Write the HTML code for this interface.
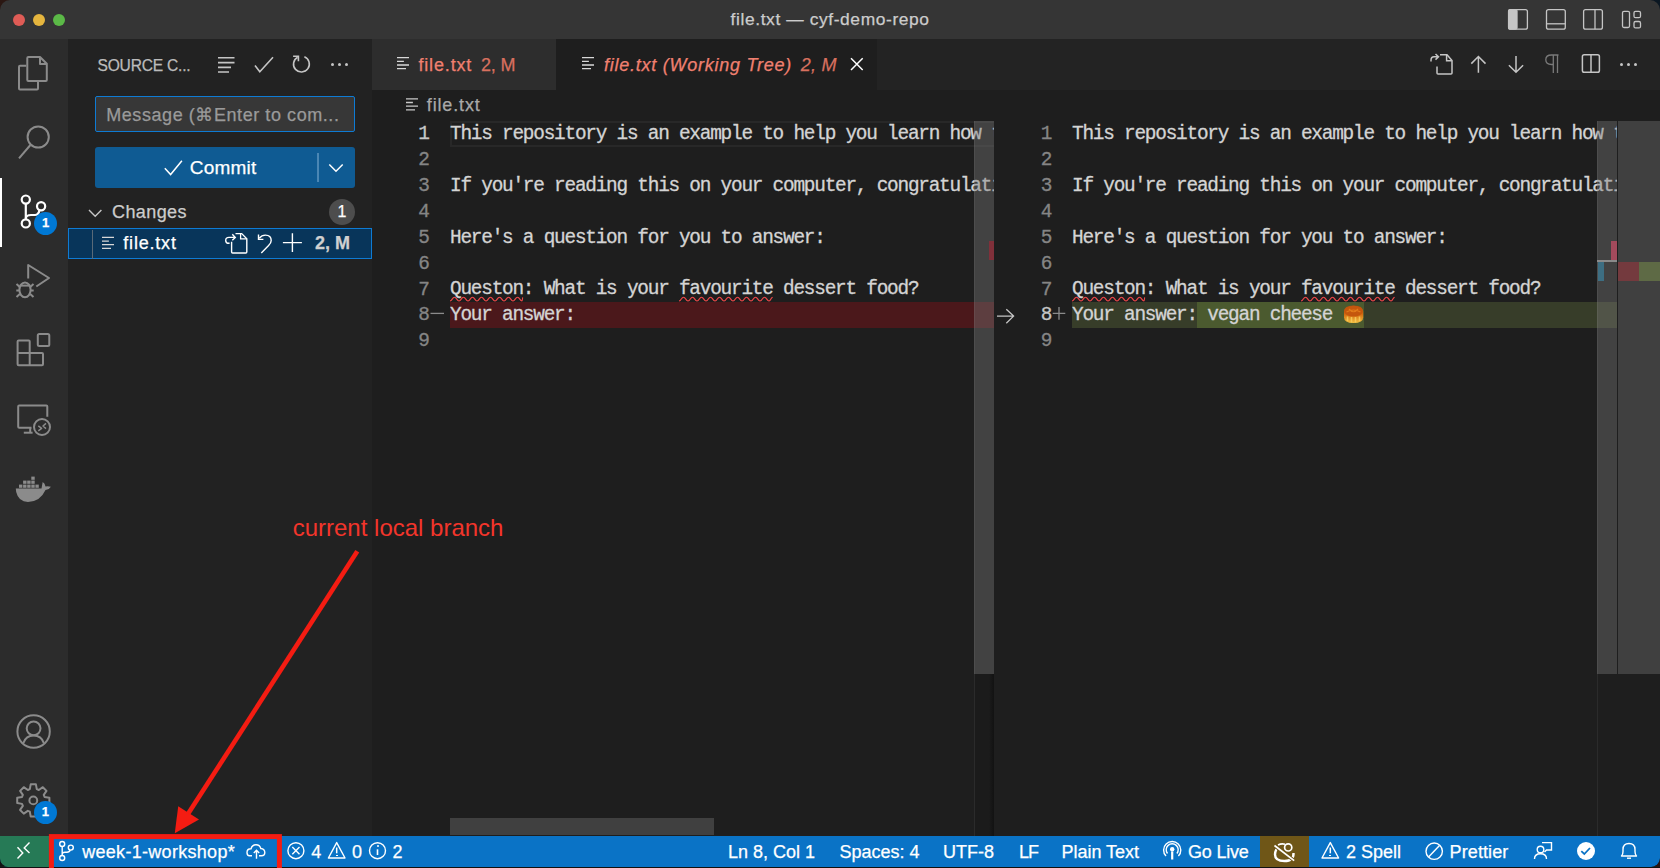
<!DOCTYPE html>
<html><head><meta charset="utf-8">
<style>
*{box-sizing:border-box;margin:0;padding:0}
html,body{width:1660px;height:868px;overflow:hidden;background:#1e1e1e}
body{position:relative;font-family:"Liberation Sans",sans-serif;color:#ccc;-webkit-text-stroke-width:0.25px}
.a{position:absolute;white-space:nowrap}
svg{position:absolute;overflow:visible}
.mono{font-family:"Liberation Mono",monospace}
#title{left:0;top:0;width:1660px;height:39px;background:#353535}
#act{left:0;top:39px;width:68px;height:797px;background:#2c2c2c}
#side{left:68px;top:39px;width:304px;height:797px;background:#222222}
#tabs{left:372px;top:39px;width:1288px;height:50.6px;background:#232323}
#status{left:0;top:836px;width:1660px;height:32px;background:#007acc}
.code{font-family:"Liberation Mono",monospace;font-size:19.40px;letter-spacing:-1.230px;line-height:25.9px;height:25.9px;color:#d4d4d4;-webkit-text-stroke-width:0.3px}
.ln{width:40px;text-align:right;color:#858585;letter-spacing:0}
.sb{top:842.3px;font-size:18px;color:#fff;line-height:20px}
</style></head><body>
<!-- title bar -->
<div id="title" class="a">
  <div class="a" style="left:12.9px;top:13.8px;width:12.4px;height:12.4px;border-radius:50%;background:#df5c56"></div>
  <div class="a" style="left:32.9px;top:13.8px;width:12.4px;height:12.4px;border-radius:50%;background:#e5b53e"></div>
  <div class="a" style="left:52.9px;top:13.8px;width:12.4px;height:12.4px;border-radius:50%;background:#5bb947"></div>
  <div class="a" style="left:730.6px;top:9px;font-size:17.4px;letter-spacing:0.6px;color:#cccccc;white-space:nowrap">file.txt — cyf-demo-repo</div>
  <svg style="left:0;top:0" width="1660" height="38" fill="none" stroke="#c5c5c5" stroke-width="1.3">
    <rect x="1508.6" y="9.6" width="18.8" height="19.6" rx="2"/>
    <rect x="1508.6" y="9.6" width="8.4" height="19.6" rx="1.5" fill="#c5c5c5"/>
    <rect x="1546.5" y="9.6" width="18.8" height="19.6" rx="2"/>
    <line x1="1546.5" y1="23.8" x2="1565.3" y2="23.8"/>
    <rect x="1583.6" y="9.6" width="18.8" height="19.6" rx="2"/>
    <line x1="1595" y1="9.6" x2="1595" y2="29.2"/>
    <rect x="1622.5" y="11.3" width="7" height="16.2" rx="1.5"/>
    <rect x="1634" y="11.3" width="6.5" height="6.4" rx="1.5"/>
    <rect x="1634" y="21.5" width="6.5" height="6.4" rx="1.5"/>
  </svg>
</div>
<!-- activity bar -->
<div id="act" class="a"></div>
<div class="a" style="left:0;top:178px;width:1.6px;height:69px;background:#ffffff"></div>
<svg style="left:0;top:0" width="68" height="836" fill="none" stroke="#8b8b8b" stroke-width="2" stroke-linejoin="round">
  <!-- files -->
  <path d="M26.2,65.8 H20 Q19,65.8 19,66.8 V88.6 Q19,89.6 20,89.6 H37 Q38,89.6 38,88.6 V82"/>
  <path d="M28.3,57 H40 L46.8,63.8 V79.9 Q46.8,81 45.8,81 H28.3 Q27.3,81 27.3,80 V58 Q27.3,57 28.3,57Z"/>
  <path d="M40,57.3 V64 H46.5"/>
  <!-- search -->
  <circle cx="38.2" cy="137" r="10.6"/>
  <line x1="30.4" y1="145" x2="19" y2="158.3"/>
  <!-- debug -->
  <path d="M28.2,278.6 V265 L49,278 L36.3,286.5"/>
  <ellipse cx="25" cy="289.8" rx="5.6" ry="7.4"/>
  <line x1="19.6" y1="285.6" x2="30.4" y2="285.6"/>
  <path d="M16.5,284 L19.8,287 M33.5,284 L30.2,287 M16.3,290.5 H19.5 M30.5,290.5 H33.7 M16.5,297 L19.8,294 M33.5,297 L30.2,294" />
  <!-- extensions -->
  <rect x="37.8" y="334" width="11.5" height="11.9" rx="1.5"/>
  <path d="M18.6,340.4 H28.7 Q29.7,340.4 29.7,341.4 V353 H42 Q43,353 43,354 V364.2 Q43,365.2 42,365.2 H18.6 Q17.6,365.2 17.6,364.2 V341.4 Q17.6,340.4 18.6,340.4Z"/>
  <path d="M17.6,353 H29.7 V365.2"/>
  <!-- remote explorer -->
  <path d="M31.5,427.7 H19.2 Q18.2,427.7 18.2,426.7 V406.5 Q18.2,405.5 19.2,405.5 H46.3 Q47.3,405.5 47.3,406.5 V416.8"/>
  <line x1="23.8" y1="432.7" x2="32.6" y2="432.7"/>
  <line x1="30.2" y1="428" x2="30.2" y2="432.7"/>
  <circle cx="42" cy="427" r="8"/>
  <path d="M38.3,425.9 L41.6,428.4 L38.3,430.9 M46,423.4 L43,426 L46,428.6" stroke-width="1.5"/>
  <!-- account -->
  <circle cx="33.6" cy="731.5" r="16.2"/>
  <circle cx="33.6" cy="728.3" r="6.9"/>
  <path d="M23.4,743 Q26,735.6 33.6,735.6 Q41.2,735.6 43.8,743"/>
  <!-- gear -->
  <path d="M29.81,789.13 L30.70,784.31 L35.90,784.31 L36.79,789.13 L38.81,789.96 L42.84,787.19 L46.51,790.86 L43.74,794.89 L44.57,796.91 L49.39,797.80 L49.39,803.00 L44.57,803.89 L43.74,805.91 L46.51,809.94 L42.84,813.61 L38.81,810.84 L36.79,811.67 L35.90,816.49 L30.70,816.49 L29.81,811.67 L27.79,810.84 L23.76,813.61 L20.09,809.94 L22.86,805.91 L22.03,803.89 L17.21,803.00 L17.21,797.80 L22.03,796.91 L22.86,794.89 L20.09,790.86 L23.76,787.19 L27.79,789.96Z"/>
  <circle cx="33.3" cy="800.4" r="3.9"/>
</svg>
<!-- docker -->
<svg style="left:0;top:0" width="68" height="836" fill="#8b8b8b">
  <path d="M15.8,488.4 H41.5 Q42.5,483 42.7,482 Q45,483.2 45.5,486.5 Q48,486 50.9,486.7 Q49.5,489.5 45.5,490 Q40,501.9 28,501.9 Q18.5,501.9 16.2,492 Z"/>
  <g>
    <rect x="19" y="484.6" width="3.4" height="3.2"/>
    <rect x="23.1" y="484.6" width="3.4" height="3.2"/>
    <rect x="27.2" y="484.6" width="3.4" height="3.2"/>
    <rect x="31.3" y="484.6" width="3.4" height="3.2"/>
    <rect x="35.4" y="484.6" width="3.4" height="3.2"/>
    <rect x="23.1" y="480.6" width="3.4" height="3.2"/>
    <rect x="27.2" y="480.6" width="3.4" height="3.2"/>
    <rect x="31.3" y="480.6" width="3.4" height="3.2"/>
    <rect x="31.3" y="476.6" width="3.4" height="3.2"/>
  </g>
</svg>
<!-- SCM active -->
<svg style="left:0;top:0" width="68" height="836" fill="none" stroke="#ffffff" stroke-width="2.2">
  <circle cx="25.8" cy="199.6" r="4.1"/>
  <circle cx="41.1" cy="206.2" r="4.1"/>
  <circle cx="25.8" cy="223.4" r="4.1"/>
  <path d="M25.8,203.7 V219.3"/>
  <path d="M25.8,218 Q26.5,215 31,215 H35 Q38.5,215 39.6,210"/>
</svg>
<div class="a" style="left:33.9px;top:211.7px;width:23.4px;height:23.4px;border-radius:50%;background:#0078d4"></div>
<div class="a" style="left:33.9px;top:214.7px;width:23.4px;text-align:center;font-size:13px;font-weight:bold;color:#fff">1</div>
<div class="a" style="left:34px;top:801.1px;width:22.8px;height:22.8px;border-radius:50%;background:#0078d4"></div>
<div class="a" style="left:34px;top:803.8px;width:22.8px;text-align:center;font-size:13px;font-weight:bold;color:#fff">1</div>
<!-- sidebar -->
<div id="side" class="a"></div>
<div class="a" style="left:97.5px;top:56.8px;font-size:15.6px;letter-spacing:-0.22px;color:#bbbbbb">SOURCE C...</div>

<!-- commit input -->
<div class="a" style="left:95.4px;top:95.6px;width:259.6px;height:36.7px;background:#373737;border:1.3px solid #0e7bd4;border-radius:2px"></div>
<div class="a" style="left:106.2px;top:104.3px;font-size:18px;letter-spacing:0.57px;color:#9a9a9a">Message (⌘Enter to com...</div>
<!-- commit button -->
<div class="a" style="left:95.2px;top:147.3px;width:259.6px;height:40.5px;background:#0f5b93;border-radius:3px"></div>
<div class="a" style="left:189.8px;top:156.5px;font-size:19px;letter-spacing:0.2px;color:#ffffff">Commit</div>
<!-- changes -->
<div class="a" style="left:112px;top:202px;font-size:18px;letter-spacing:0.4px;color:#cccccc">Changes</div>
<div class="a" style="left:329px;top:199px;width:26px;height:26px;border-radius:50%;background:#4d4d4d"></div>
<div class="a" style="left:329px;top:203.2px;width:26px;text-align:center;font-size:16px;color:#fff">1</div>
<!-- file row -->
<div class="a" style="left:68px;top:228.2px;width:304px;height:31.2px;background:#08355a;border:1.2px solid #0e7bd4"></div>
<div class="a" style="left:91.5px;top:229.5px;width:1px;height:29px;background:#5a6a78"></div>
<div class="a" style="left:123.3px;top:233.3px;font-size:18px;letter-spacing:0.8px;color:#ffffff">file.txt</div>
<div class="a" style="left:315px;top:233.3px;font-size:18px;font-weight:bold;letter-spacing:0px;color:#d0d0d0">2, M</div>
<svg style="left:0;top:0" width="372" height="836" fill="none" stroke="#c5c5c5" stroke-width="1.6">
  <!-- list (tree) icon -->
  <path d="M218,57.8 H234.5 M218,62.6 H234.5 M218,67.4 H231 M218,72 H229" />
  <!-- check -->
  <path d="M255,65.5 L259.8,71.8 L273,57.3" />
  <!-- refresh -->
  <path d="M304.4,56.8 A7.9,7.9 0 1 1 297.6,57.2" />
  <path d="M293.1,56.3 H298.4 V61.3" />
  <!-- commit check -->
  <path d="M164.8,168.3 L170.6,174.6 L181.9,160.8" stroke="#fff" stroke-width="1.5"/>
  <line x1="318" y1="153" x2="318" y2="182" stroke="#6b9fc6" stroke-width="1.3"/>
  <path d="M329.3,164.5 L336,171.2 L342.7,164.5" stroke="#fff" stroke-width="1.5"/>
  <!-- changes chevron -->
  <path d="M89,210 L95.2,216.3 L101.4,210" stroke-width="1.4"/>
  <!-- file row icons -->
  <path d="M102,237.4 H114 M102,241.1 H108.9 M102,244.7 H114 M102,248.4 H111" stroke="#d8d8d8" stroke-width="1.3"/>
  <!-- open file -->
  <path d="M231.6,241.8 V252 Q231.6,253 232.6,253 H245.8 Q246.8,253 246.8,252 V238.8 L241.7,233.6 H235.5" stroke="#fff" stroke-width="1.4"/>
  <path d="M240.6,233.8 V238.8 H246.6" stroke="#fff" stroke-width="1.3"/>
  <path d="M232.3,234.2 L235.3,237.4 L232.3,240.2 M234.8,237.4 H229 Q225.7,237.4 225.7,240.4 Q225.7,243.3 229,243.3 H229.6" stroke="#fff" stroke-width="1.4"/>
  <!-- revert -->
  <path d="M261.3,252.9 L268.6,245.6 Q271.2,243 271.2,240.6 Q271.2,235.1 265.4,235.1 Q261.7,235.1 259.2,238.2" stroke="#fff" stroke-width="1.4"/>
  <path d="M258.5,234.6 V239.4 H263.4" stroke="#fff" stroke-width="1.4"/>
  <!-- plus -->
  <path d="M292.4,233.2 V251.9 M282.9,242.6 H301.9" stroke="#fff" stroke-width="1.4"/>
</svg>
<div class="a" style="left:330.5px;top:62.5px;width:3.2px;height:3.2px;border-radius:50%;background:#c5c5c5"></div>
<div class="a" style="left:337.5px;top:62.5px;width:3.2px;height:3.2px;border-radius:50%;background:#c5c5c5"></div>
<div class="a" style="left:344.5px;top:62.5px;width:3.2px;height:3.2px;border-radius:50%;background:#c5c5c5"></div>
<!-- tabs -->
<div id="tabs" class="a"></div>
<div class="a" style="left:372px;top:39px;width:184.3px;height:50.6px;background:#2d2d2d"></div>
<div class="a" style="left:556.3px;top:39px;width:320.3px;height:50.6px;background:#1e1e1e"></div>
<div class="a" style="left:418.4px;top:54.7px;font-size:18px;letter-spacing:0.85px;color:#f08070">file.txt</div>
<div class="a" style="left:481px;top:54.7px;font-size:18px;letter-spacing:-0.2px;color:#d8705f">2, M</div>
<div class="a" style="left:604px;top:54.7px;font-size:18px;font-style:italic;letter-spacing:0.75px;color:#f08070">file.txt (Working Tree)</div>
<div class="a" style="left:800.8px;top:54.7px;font-size:18px;font-style:italic;letter-spacing:0.2px;color:#d8705f">2, M</div>
<svg style="left:0;top:0" width="1660" height="130" fill="none" stroke="#c5c5c5" stroke-width="1.5">
  <!-- tab icons -->
  <path d="M397,57.7 H409 M397,61.4 H403.9 M397,65 H409 M397,68.7 H406" stroke="#d8d8d8" stroke-width="1.3"/>
  <path d="M582,57.7 H594 M582,61.4 H588.9 M582,65 H594 M582,68.7 H591" stroke="#d8d8d8" stroke-width="1.3"/>
  <path d="M406,98.8 H418 M406,102.5 H412.9 M406,106.1 H418 M406,109.8 H415" stroke="#c8c8c8" stroke-width="1.3"/>
  <!-- close -->
  <path d="M851,58.3 L862.7,70 M862.7,58.3 L851,70" stroke="#ffffff" stroke-width="1.5"/>
  <!-- editor actions -->
  <path d="M1437,66.5 V73 Q1437,74 1438,74 H1451 Q1452,74 1452,73 V60.5 L1447,54.7 H1440" />
  <path d="M1446.6,55 V60.8 H1451.8" />
  <path d="M1435.5,54 L1438.5,56.8 L1435.5,59.6 M1438.2,56.8 H1434 Q1431,56.8 1431,60.2 V61.5" />
  <path d="M1478.4,56.5 V72.8 M1471.3,63.6 L1478.4,56.5 L1485.5,63.6" />
  <path d="M1516,56 V72.3 M1508.9,65.2 L1516,72.3 L1523.1,65.2" />
  <path d="M1553.3,55 V73 M1557.5,55 V73 M1558.5,55 H1551.5 Q1545.8,55 1545.8,59.8 Q1545.8,64.5 1551.5,64.5 H1553.3" stroke="#7a7a7a" stroke-width="1.3"/>
  <rect x="1582.4" y="54.7" width="17" height="17.5" rx="1.8"/>
  <line x1="1591" y1="54.7" x2="1591" y2="72.2"/>
</svg>
<div class="a" style="left:1619.5px;top:62.6px;width:3.2px;height:3.2px;border-radius:50%;background:#c5c5c5"></div>
<div class="a" style="left:1626.5px;top:62.6px;width:3.2px;height:3.2px;border-radius:50%;background:#c5c5c5"></div>
<div class="a" style="left:1633.5px;top:62.6px;width:3.2px;height:3.2px;border-radius:50%;background:#c5c5c5"></div>
<div class="a" style="left:426.8px;top:95.2px;font-size:18px;letter-spacing:0.85px;color:#a9a9a9">file.txt</div>
<!-- editor code -->
<div class="a" style="left:449.9px;top:121.1px;width:544.3px;height:25.90px;border:2.2px solid #282828;border-right:none"></div>
<div class="a" style="left:449.9px;top:302.40px;width:544.3px;height:25.90px;background:#4b181b"></div>
<div class="a" style="left:1072px;top:302.40px;width:588px;height:25.90px;background:#373d29"></div>
<div class="a" style="left:1196.9px;top:302.40px;width:167.1px;height:25.90px;background:#4b5a2f"></div>
<div class="a" style="left:450px;top:121.1px;width:544px;height:240px;overflow:hidden">
<div class="a code" style="left:0;top:1.00px">This repository is an example to help you learn how to use Git and GitHub.</div>
<div class="a code" style="left:0;top:52.80px">If you're reading this on your computer, congratulations! You've cloned it.</div>
<div class="a code" style="left:0;top:104.60px">Here's a question for you to answer:</div>
<div class="a code" style="left:0;top:156.40px">Queston: What is your favourite dessert food?</div>
<div class="a code" style="left:0;top:182.30px">Your answer:</div>
</div>
<div class="a code ln" style="left:389.8px;top:122.10px;color:#c6c6c6">1</div>
<div class="a code ln" style="left:389.8px;top:148.00px">2</div>
<div class="a code ln" style="left:389.8px;top:173.90px">3</div>
<div class="a code ln" style="left:389.8px;top:199.80px">4</div>
<div class="a code ln" style="left:389.8px;top:225.70px">5</div>
<div class="a code ln" style="left:389.8px;top:251.60px">6</div>
<div class="a code ln" style="left:389.8px;top:277.50px">7</div>
<div class="a code ln" style="left:389.8px;top:303.40px">8</div>
<div class="a code ln" style="left:389.8px;top:329.30px">9</div>
<div class="a" style="left:1072px;top:121.1px;width:545px;height:240px;overflow:hidden">
<div class="a code" style="left:0;top:1.00px">This repository is an example to help you learn how to use Git and GitHub.</div>
<div class="a code" style="left:0;top:52.80px">If you're reading this on your computer, congratulations! You've cloned it.</div>
<div class="a code" style="left:0;top:104.60px">Here's a question for you to answer:</div>
<div class="a code" style="left:0;top:156.40px">Queston: What is your favourite dessert food?</div>
<div class="a code" style="left:0;top:182.30px">Your answer: vegan cheese </div>
</div>
<div class="a code ln" style="left:1012.3px;top:122.10px">1</div>
<div class="a code ln" style="left:1012.3px;top:148.00px">2</div>
<div class="a code ln" style="left:1012.3px;top:173.90px">3</div>
<div class="a code ln" style="left:1012.3px;top:199.80px">4</div>
<div class="a code ln" style="left:1012.3px;top:225.70px">5</div>
<div class="a code ln" style="left:1012.3px;top:251.60px">6</div>
<div class="a code ln" style="left:1012.3px;top:277.50px">7</div>
<div class="a code ln" style="left:1012.3px;top:303.40px;color:#c6c6c6">8</div>
<div class="a code ln" style="left:1012.3px;top:329.30px">9</div>
<!-- decorations -->
<svg style="left:0;top:0" width="1660" height="868" fill="none" stroke="#f0484a" stroke-width="1.15"><path d="M450.0,301.0 C452.2,301.0 452.2,297.2 454.5,297.2 C456.8,297.2 456.8,301.0 459.0,301.0 C461.2,301.0 461.2,297.2 463.5,297.2 C465.8,297.2 465.8,301.0 468.0,301.0 C470.2,301.0 470.2,297.2 472.5,297.2 C474.8,297.2 474.8,301.0 477.0,301.0 C479.2,301.0 479.2,297.2 481.5,297.2 C483.8,297.2 483.8,301.0 486.0,301.0 C488.2,301.0 488.2,297.2 490.5,297.2 C492.8,297.2 492.8,301.0 495.0,301.0 C497.2,301.0 497.2,297.2 499.5,297.2 C501.8,297.2 501.8,301.0 504.0,301.0 C506.2,301.0 506.2,297.2 508.5,297.2 C510.8,297.2 510.8,301.0 513.0,301.0 C515.2,301.0 515.2,297.2 517.5,297.2 C519.8,297.2 519.8,301.0 522.0,301.0 C522.4,301.0 522.4,297.2 522.9,297.2"/>
<path d="M679.0,301.0 C681.3,301.0 681.3,297.2 683.5,297.2 C685.8,297.2 685.8,301.0 688.0,301.0 C690.3,301.0 690.3,297.2 692.5,297.2 C694.8,297.2 694.8,301.0 697.0,301.0 C699.3,301.0 699.3,297.2 701.5,297.2 C703.8,297.2 703.8,301.0 706.0,301.0 C708.3,301.0 708.3,297.2 710.5,297.2 C712.8,297.2 712.8,301.0 715.0,301.0 C717.3,301.0 717.3,297.2 719.5,297.2 C721.8,297.2 721.8,301.0 724.0,301.0 C726.3,301.0 726.3,297.2 728.5,297.2 C730.8,297.2 730.8,301.0 733.0,301.0 C735.3,301.0 735.3,297.2 737.5,297.2 C739.8,297.2 739.8,301.0 742.0,301.0 C744.3,301.0 744.3,297.2 746.5,297.2 C748.8,297.2 748.8,301.0 751.0,301.0 C753.3,301.0 753.3,297.2 755.5,297.2 C757.8,297.2 757.8,301.0 760.0,301.0 C762.3,301.0 762.3,297.2 764.5,297.2 C766.8,297.2 766.8,301.0 769.0,301.0 C770.9,301.0 770.9,297.2 772.7,297.2"/>
<path d="M1072.0,301.0 C1074.2,301.0 1074.2,297.2 1076.5,297.2 C1078.8,297.2 1078.8,301.0 1081.0,301.0 C1083.2,301.0 1083.2,297.2 1085.5,297.2 C1087.8,297.2 1087.8,301.0 1090.0,301.0 C1092.2,301.0 1092.2,297.2 1094.5,297.2 C1096.8,297.2 1096.8,301.0 1099.0,301.0 C1101.2,301.0 1101.2,297.2 1103.5,297.2 C1105.8,297.2 1105.8,301.0 1108.0,301.0 C1110.2,301.0 1110.2,297.2 1112.5,297.2 C1114.8,297.2 1114.8,301.0 1117.0,301.0 C1119.2,301.0 1119.2,297.2 1121.5,297.2 C1123.8,297.2 1123.8,301.0 1126.0,301.0 C1128.2,301.0 1128.2,297.2 1130.5,297.2 C1132.8,297.2 1132.8,301.0 1135.0,301.0 C1137.2,301.0 1137.2,297.2 1139.5,297.2 C1141.8,297.2 1141.8,301.0 1144.0,301.0 C1144.4,301.0 1144.4,297.2 1144.9,297.2"/>
<path d="M1301.0,301.0 C1303.3,301.0 1303.3,297.2 1305.5,297.2 C1307.8,297.2 1307.8,301.0 1310.0,301.0 C1312.3,301.0 1312.3,297.2 1314.5,297.2 C1316.8,297.2 1316.8,301.0 1319.0,301.0 C1321.3,301.0 1321.3,297.2 1323.5,297.2 C1325.8,297.2 1325.8,301.0 1328.0,301.0 C1330.3,301.0 1330.3,297.2 1332.5,297.2 C1334.8,297.2 1334.8,301.0 1337.0,301.0 C1339.3,301.0 1339.3,297.2 1341.5,297.2 C1343.8,297.2 1343.8,301.0 1346.0,301.0 C1348.3,301.0 1348.3,297.2 1350.5,297.2 C1352.8,297.2 1352.8,301.0 1355.0,301.0 C1357.3,301.0 1357.3,297.2 1359.5,297.2 C1361.8,297.2 1361.8,301.0 1364.0,301.0 C1366.3,301.0 1366.3,297.2 1368.5,297.2 C1370.8,297.2 1370.8,301.0 1373.0,301.0 C1375.3,301.0 1375.3,297.2 1377.5,297.2 C1379.8,297.2 1379.8,301.0 1382.0,301.0 C1384.3,301.0 1384.3,297.2 1386.5,297.2 C1388.8,297.2 1388.8,301.0 1391.0,301.0 C1392.9,301.0 1392.9,297.2 1394.7,297.2"/></svg>
<div class="a" style="left:973.8px;top:121px;width:20.5px;height:553px;background:rgba(121,121,121,0.4);border-left:1px solid rgba(255,255,255,0.06)"></div>
<div class="a" style="left:973.8px;top:674px;width:20.5px;height:162px;background:#1b1b1b;border-left:1px solid #2b2b2b"></div>
<div class="a" style="left:989px;top:674px;width:5.3px;height:162px;background:linear-gradient(to right,rgba(0,0,0,0),rgba(0,0,0,0.35))"></div>
<div class="a" style="left:989px;top:241px;width:5.2px;height:19.3px;background:#80303a"></div>
<div class="a" style="left:1596.9px;top:121px;width:20.2px;height:553px;background:rgba(121,121,121,0.4);border-left:1px solid rgba(255,255,255,0.06)"></div>
<div class="a" style="left:1596.9px;top:674px;width:20.2px;height:162px;background:#1e1e1e;border-left:1px solid #2b2b2b"></div>
<div class="a" style="left:1617px;top:121px;width:1.1px;height:553px;background:#1e1e1e"></div>
<div class="a" style="left:1618.1px;top:121px;width:41.9px;height:553px;background:#404040"></div>
<div class="a" style="left:1611px;top:241px;width:6px;height:19.3px;background:#a34a5c"></div>
<div class="a" style="left:1597px;top:260px;width:20px;height:1.8px;background:#8a8a8a"></div>
<div class="a" style="left:1598px;top:261.7px;width:5.7px;height:19.2px;background:#3d6e82"></div>
<div class="a" style="left:1618.1px;top:261.7px;width:21.1px;height:19.2px;background:#743a3e"></div>
<div class="a" style="left:1639.2px;top:261.7px;width:20.8px;height:19.2px;background:#5e6a45"></div>
<div class="a" style="left:449.9px;top:817.9px;width:263.9px;height:17.4px;background:#404040"></div>
<svg style="left:0;top:0" width="1660" height="868" fill="none" stroke="#c5c5c5" stroke-width="1.3"><path d="M997,316.1 H1014 M1006.3,309.2 L1013.6,316.1 L1006.3,323.2"/><path d="M430.5,313.4 H444" stroke="#8b8b8b"/><path d="M1052.7,313.4 H1065.3 M1059,307 V319.7" stroke="#8b8b8b"/></svg>
<svg style="left:0;top:0" width="1660" height="868">
<defs><linearGradient id="eg" x1="0" y1="0" x2="0" y2="1"><stop offset="0" stop-color="#b84a0c"/><stop offset="0.5" stop-color="#d46a10"/><stop offset="1" stop-color="#f4c040"/></linearGradient></defs>
<path d="M1344,311.5 Q1344,305.5 1353.5,305.5 Q1363.2,305.5 1363.2,311.5 V317.2 Q1363.2,323 1353.5,323 Q1344,323 1344,317.2 Z" fill="url(#eg)"/>
<ellipse cx="1353.5" cy="311.2" rx="9.4" ry="5.4" fill="#c4560d"/>
<path d="M1346.5,312 Q1353.5,308 1360.5,312 M1349,309 Q1353.5,314.5 1358,309" stroke="#e07a1a" stroke-width="1.2" fill="none"/>
<path d="M1347.5,316.5 V321 M1351.5,317 V322.5 M1355.5,317 V322.5 M1359.5,316.5 V321" stroke="#f8d060" stroke-width="1.6" opacity="0.8"/>
</svg>
<!-- status bar -->
<div class="a" style="left:0;top:866.6px;width:1660px;height:1.4px;background:#111"></div>
<div class="a" style="left:0;top:835.8px;width:1660px;height:30.8px;background:#0a73c6;border-radius:0 0 9px 8px"></div>
<div class="a" style="left:0;top:835.8px;width:49px;height:30.8px;background:#267a56;border-radius:0 0 0 8px"></div>
<div class="a" style="left:1259.9px;top:835.8px;width:48.8px;height:30.8px;background:#6f5617"></div>
<svg style="left:0;top:0" width="1660" height="868" fill="none" stroke="#ffffff" stroke-width="1.4">
  <path d="M17.5,847.2 L22.8,853 L17.5,858.6 M29.5,842.6 L24.2,848 L29.5,853"/>
  <circle cx="62.2" cy="844" r="2.5"/>
  <circle cx="70.8" cy="847.6" r="2.5"/>
  <circle cx="62.2" cy="858" r="2.5"/>
  <path d="M62.2,846.5 V855.5 M62.2,854 Q62.5,852.2 65,852.2 H67 Q69.5,852.2 70.2,850"/>
  <!-- cloud -->
  <path d="M252,855.8 H249.5 Q247,855.8 247,852.5 Q247,848.8 251,848.8 Q252,844.7 256,844.7 Q259.8,844.7 260.8,848.5 Q264.8,849 264.8,852.6 Q264.8,855.8 261.5,855.8 H259"/>
  <path d="M256.5,858.7 V850.3 M253.8,853 L256.5,850.3 L259.2,853"/>
  <!-- error -->
  <circle cx="295.9" cy="850.7" r="8"/>
  <path d="M292.3,847.1 L299.5,854.3 M299.5,847.1 L292.3,854.3"/>
  <!-- warning -->
  <path d="M336.7,842.6 L345,858 H328.4 Z" stroke-linejoin="round"/>
  <path d="M336.7,847.5 V853.3" stroke-width="1.5"/>
  <!-- info -->
  <circle cx="377.5" cy="850.7" r="8"/>
  <path d="M377.5,849.3 V855" stroke-width="1.6"/>
  <!-- go live -->
  <circle cx="1172.2" cy="849.2" r="2.2" fill="#fff" stroke="none"/>
  <path d="M1172.2,851.4 V859.5" stroke-width="2.2"/>
  <path d="M1167.5,853.5 A6,6 0 1 1 1176.9,853.5"/>
  <path d="M1166,856 A8.6,8.6 0 1 1 1178.4,856"/>
  <!-- copilot-ish crossed -->
  <circle cx="1288.2" cy="847.4" r="3.6" stroke-width="1.7"/>
  <path d="M1278,845 Q1281.5,843.2 1285,844.2" stroke-width="1.7"/>
  <path d="M1276.5,849 Q1275,852 1275,854.5 Q1275,861 1284.5,861 Q1294,861 1293.5,853" stroke-width="2.4"/>
    <path d="M1274.5,845.5 L1294.2,860.6" stroke="#6f5617" stroke-width="3.6"/>
  <path d="M1274.5,845.5 L1294.2,860.6" stroke-width="1.7"/>
  <!-- 2 spell warning -->
  <path d="M1330.3,842.6 L1338.6,858 H1322 Z" stroke-linejoin="round"/>
  <path d="M1330.3,847.5 V853.3" stroke-width="1.5"/>
  <!-- prettier -->
  <circle cx="1434.2" cy="851.2" r="8.2"/>
  <path d="M1439.5,845.5 L1428.8,856.8"/>
  <!-- feedback -->
  <path d="M1542,842.6 H1551.5 V850 H1546.5 L1544.5,852" />
  <circle cx="1540.5" cy="849.5" r="3.3"/>
  <path d="M1534.5,859 Q1534.5,853.8 1540.5,853.8 Q1546.5,853.8 1546.5,859"/>
  <!-- bell -->
  <path d="M1621.5,856 Q1623,854.5 1623,851.5 V849.5 Q1623,843.5 1629,843.5 Q1635,843.5 1635,849.5 V851.5 Q1635,854.5 1636.5,856 Z" stroke-linejoin="round"/>
  <path d="M1627,858.2 H1631"/>
</svg>
<div class="a" style="left:1576.5px;top:842px;width:18px;height:18px;border-radius:50%;background:#fff"></div>
<svg style="left:0;top:0" width="1660" height="868" fill="none" stroke="#0a73c6" stroke-width="1.8">
  <path d="M1581.3,851.2 L1584.3,854 L1590,848"/>
</svg>
<div class="a" style="left:376.5px;top:845.2px;width:2.2px;height:2.2px;background:#fff;border-radius:50%"></div>
<div class="a" style="left:335.8px;top:854.6px;width:1.8px;height:1.8px;background:#fff"></div>
<div class="a" style="left:1329.4px;top:854.6px;width:1.8px;height:1.8px;background:#fff"></div>
<div class="a sb" style="left:82.2px;letter-spacing:0.3px">week-1-workshop*</div>
<div class="a sb" style="left:311.2px">4</div>
<div class="a sb" style="left:352px">0</div>
<div class="a sb" style="left:392.5px">2</div>
<div class="a sb" style="left:728px">Ln 8, Col 1</div>
<div class="a sb" style="left:839.5px">Spaces: 4</div>
<div class="a sb" style="left:943px">UTF-8</div>
<div class="a sb" style="left:1019px;letter-spacing:-1px">LF</div>
<div class="a sb" style="left:1061.4px">Plain Text</div>
<div class="a sb" style="left:1188px;letter-spacing:-0.2px">Go Live</div>
<div class="a sb" style="left:1346px">2 Spell</div>
<div class="a sb" style="left:1449.6px;letter-spacing:0.1px">Prettier</div>
<!-- annotation -->
<div class="a" style="left:292.7px;top:514px;font-size:24px;color:#f2352b;-webkit-text-stroke-width:0">current local branch</div>
<svg style="left:0;top:0" width="1660" height="868" fill="none" stroke="#f41c12">
  <rect x="51.4" y="836.6" width="228" height="40" stroke-width="5"/>
  <line x1="357.3" y1="551.3" x2="186" y2="817" stroke-width="4.6"/>
  <path d="M174.8,833.3 L178.2,806.2 L199,819.5 Z" fill="#f41c12" stroke="none"/>
</svg>
<svg style="left:0;top:0" width="1660" height="868" stroke="none">
  <path d="M0,0 H10 A10,10 0 0 0 0,10 Z" fill="#2b1712"/>
  <path d="M1660,0 H1650 A10,10 0 0 1 1660,10 Z" fill="#0b1722"/>
  <path d="M0,858.6 A8,8 0 0 0 8,866.6 H0 Z" fill="#121212"/>
  <path d="M1660,858.6 A8,8 0 0 1 1652,866.6 H1660 Z" fill="#2a1210"/>
</svg>
</body></html>
